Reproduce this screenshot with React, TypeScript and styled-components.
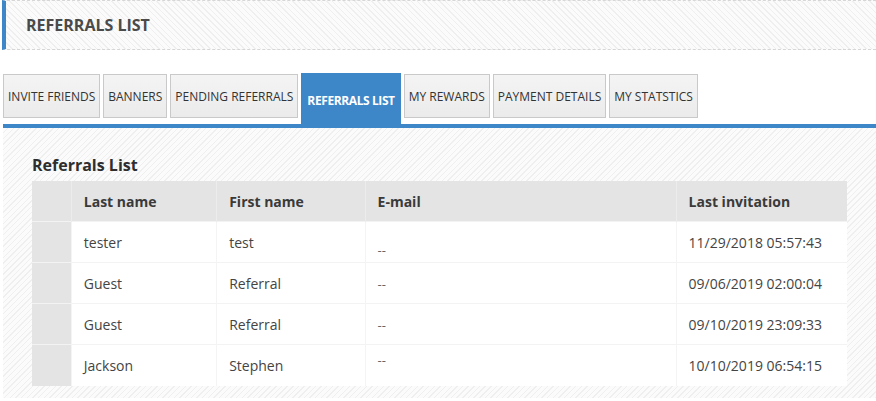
import React from "react";
import styled, { createGlobalStyle, css } from "styled-components";

const GlobalStyle = createGlobalStyle`
  html, body { margin: 0; padding: 0; background: #fff; }
  body { font-family: "Open Sans", "Liberation Sans", sans-serif; color: #444; }
`;

const stripes = (dir: string) => css`
  background-color: #fafafa;
  background-image: repeating-linear-gradient(
    ${dir},
    #efefef 0px,
    #efefef 1px,
    #fbfbfb 1px,
    #fbfbfb 4px
  );
`;

const Page = styled.div`
  width: 876px;
  height: 401px;
  overflow: hidden;
`;

const TitleBar = styled.div`
  ${stripes("45deg")}
  height: 48px;
  margin-left: 2px;
  border-left: 4px solid #3d86c8;
  border-top: 1px dashed #d6d6d6;
  border-bottom: 1px dashed #d6d6d6;
  display: flex;
  align-items: center;
  padding-left: 20px;
`;

const Title = styled.h1`
  margin: 0;
  font-size: 16px;
  font-weight: 700;
  color: #4a4a4a;
`;

const TabStrip = styled.div`
  display: flex;
  align-items: flex-end;
  gap: 3px;
  margin: 23px 0 0 3px;
  border-bottom: 4px solid #3d86c8;
`;

const Tab = styled.div<{ $active?: boolean }>`
  box-sizing: border-box;
  padding: 0 ${(p) => (p.$active ? 6 : 4)}px;
  font-size: 12px;
  text-transform: uppercase;
  display: flex;
  align-items: center;
  white-space: nowrap;
  ${(p) =>
    p.$active
      ? css`
          height: 51px;
          background: #3d86c8;
          color: #fff;
          font-weight: 700;
          letter-spacing: -0.4px;
          padding-top: 4px;
        `
      : css`
          height: 44px;
          margin-bottom: 6px;
          background: linear-gradient(#f4f4f4, #ebebeb);
          border: 1px solid #c9c9c9;
          color: #333;
        `}
`;

const Panel = styled.div`
  ${stripes("-45deg")}
  margin-left: 3px;
  padding: 26px 29px 12px 29px;
`;

const PanelHeading = styled.h2`
  margin: 0 0 5px 0;
  font-size: 16px;
  font-weight: 700;
  color: #2e2e2e;
`;

const Table = styled.table`
  width: 815px;
  border-collapse: collapse;
  font-size: 14px;
  color: #444;
  background: #fff;
`;

const HeadCell = styled.th<{ $w: number; $edge?: boolean }>`
  width: ${(p) => p.$w}px;
  height: 40px;
  text-align: left;
  padding: 0 0 0 12px;
  font-weight: 700;
  color: #3a3a3a;
  background: #e4e4e4;
  border-left: ${(p) => (p.$edge ? "none" : "1px solid #ececec")};
`;

const Row = styled.tr`
  height: 41px;
  border-top: 1px solid #f3f3f3;
`;

const SideCell = styled.td`
  background: #e4e4e4;
  padding: 0;
`;

const Cell = styled.td<{ $shift?: number }>`
  padding: ${(p) => (p.$shift && p.$shift > 0 ? p.$shift : 0)}px 0
    ${(p) => (p.$shift && p.$shift < 0 ? -p.$shift : 0)}px 12px;
  border-left: 1px solid #f4f4f4;
  vertical-align: middle;
`;

const Dash = styled.span`
  color: #666;
  font-size: 13px;
`;

type Referral = {
  last: string;
  first: string;
  emailShift: number;
  invited: string;
};

const tabs = [
  "Invite Friends",
  "Banners",
  "Pending Referrals",
  "Referrals List",
  "My Rewards",
  "Payment Details",
  "My Statstics",
];

const referrals: Referral[] = [
  { last: "tester", first: "test", emailShift: 14, invited: "11/29/2018 05:57:43" },
  { last: "Guest", first: "Referral", emailShift: 0, invited: "09/06/2019 02:00:04" },
  { last: "Guest", first: "Referral", emailShift: 0, invited: "09/10/2019 23:09:33" },
  { last: "Jackson", first: "Stephen", emailShift: -12, invited: "10/10/2019 06:54:15" },
];

export default function App() {
  return (
    <Page>
      <GlobalStyle />
      <TitleBar>
        <Title>REFERRALS LIST</Title>
      </TitleBar>
      <TabStrip>
        {tabs.map((t) => (
          <Tab key={t} $active={t === "Referrals List"}>
            {t}
          </Tab>
        ))}
      </TabStrip>
      <Panel>
        <PanelHeading>Referrals List</PanelHeading>
        <Table>
          <thead>
            <tr>
              <HeadCell $w={27} $edge />
              <HeadCell $w={133}>Last name</HeadCell>
              <HeadCell $w={136}>First name</HeadCell>
              <HeadCell $w={300}>E-mail</HeadCell>
              <HeadCell $w={159}>Last invitation</HeadCell>
            </tr>
          </thead>
          <tbody>
            {referrals.map((r, i) => (
              <Row key={i}>
                <SideCell />
                <Cell>{r.last}</Cell>
                <Cell>{r.first}</Cell>
                <Cell $shift={r.emailShift}>
                  <Dash>--</Dash>
                </Cell>
                <Cell>{r.invited}</Cell>
              </Row>
            ))}
          </tbody>
        </Table>
      </Panel>
    </Page>
  );
}
